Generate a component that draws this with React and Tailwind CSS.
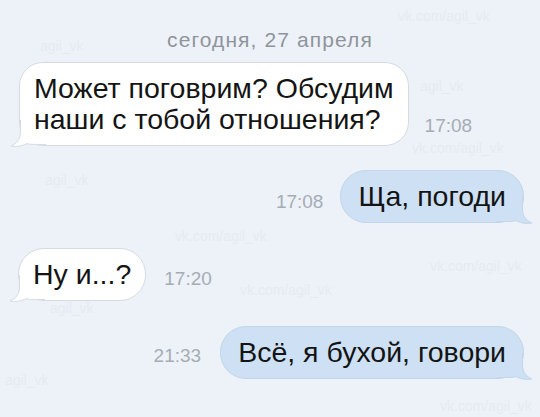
import React from "react";

const FONT = "font-['Liberation_Sans','Noto_Sans',Arial,sans-serif]";

function TailLeft() {
  return (
    <svg
      className="absolute left-[-10px] bottom-[-4px]"
      width="36"
      height="32"
      viewBox="0 0 36 32"
    >
      <path
        d="M10.5 3 L10.5 15 C10.5 22 7 26.5 1 29 C7 30.2 13 28.8 17 26.6 C20 27.6 24 27.5 36 27.5 L36 3 Z"
        fill="#ffffff"
      />
      <path
        d="M10.5 3 L10.5 15 C10.5 22 7 26.5 1 29 C7 30.2 13 28.8 17 26.6 C20 27.6 24 27.5 36 27.5"
        fill="none"
        stroke="#d6dbe3"
        strokeWidth="1"
      />
    </svg>
  );
}

function TailRight() {
  return (
    <svg
      className="absolute right-[-10px] bottom-[-4px]"
      width="36"
      height="32"
      viewBox="0 0 36 32"
    >
      <g transform="translate(36 0) scale(-1 1)">
        <path
          d="M10.5 3 L10.5 15 C10.5 22 7 26.5 1 29 C7 30.2 13 28.8 17 26.6 C20 27.6 24 27.5 36 27.5 L36 3 Z"
          fill="#cee0f4"
        />
        <path
          d="M10.5 3 L10.5 15 C10.5 22 7 26.5 1 29 C7 30.2 13 28.8 17 26.6 C20 27.6 24 27.5 36 27.5"
          fill="none"
          stroke="#c2d5ea"
          strokeWidth="1"
        />
      </g>
    </svg>
  );
}

function Time({ children, className = "" }) {
  return (
    <span
      className={"text-[19px] leading-[20px] text-[#a6acb4] " + className}
    >
      {children}
    </span>
  );
}

const marks = [
  { t: "vk.com/agil_vk", c: "left-[398px] top-[8px]" },
  { t: "agil_vk", c: "left-[40px] top-[38px]" },
  { t: "agil_vk", c: "left-[420px] top-[78px]" },
  { t: "vk.com/agil_vk", c: "left-[412px] top-[140px]" },
  { t: "agil_vk", c: "left-[45px] top-[172px]" },
  { t: "vk.com/agil_vk", c: "left-[175px] top-[228px]" },
  { t: "vk.com/agil_vk", c: "left-[430px] top-[258px]" },
  { t: "vk.com/agil_vk", c: "left-[240px] top-[282px]" },
  { t: "agil_vk", c: "left-[50px] top-[300px]" },
  { t: "agil_vk", c: "left-[5px] top-[372px]" },
  { t: "vk.com/agil_vk", c: "left-[440px] top-[398px]" },
];

const textCls =
  "relative z-10 text-[28.5px] leading-[31px] text-[#141414] whitespace-nowrap";

export default function App() {
  return (
    <div
      className={
        "relative w-[540px] h-[417px] overflow-hidden bg-[#edf2f9] " + FONT
      }
    >
      {marks.map((m, i) => (
        <span
          key={i}
          className={
            "absolute text-[14px] leading-[16px] text-[#e5eaf2] select-none " +
            m.c
          }
        >
          {m.t}
        </span>
      ))}

      <div className="relative flex flex-col pt-[28px]">
        <div className="text-center text-[21px] leading-[24px] tracking-[1.1px] text-[#8f949c]">
          сегодня, 27 апреля
        </div>

        {/* message 1 */}
        <div className="mt-[10px] flex items-end pl-[19px] gap-[16px]">
          <div className="relative rounded-[24px] border border-[#d6dbe3] bg-white px-[14px] py-[10px]">
            <span className={textCls + " block"}>
              Может поговрим? Обсудим
              <br />
              наши с тобой отношения?
            </span>
            <TailLeft />
          </div>
          <Time className="mb-[10px]">17:08</Time>
        </div>

        {/* message 2 */}
        <div className="mt-[24px] flex items-end justify-end pr-[16px] gap-[17px]">
          <Time className="mb-[11px]">17:08</Time>
          <div className="relative rounded-[26px] border border-[#c2d5ea] bg-[#cee0f4] px-[17px] py-[10px]">
            <span className={textCls + " block"}>Ща, погоди</span>
            <TailRight />
          </div>
        </div>

        {/* message 3 */}
        <div className="mt-[25px] flex items-end pl-[18px] gap-[18px]">
          <div className="relative rounded-[26px] border border-[#d6dbe3] bg-white px-[14px] py-[10px]">
            <span className={textCls + " block"}>Ну и...?</span>
            <TailLeft />
          </div>
          <Time className="mb-[12px]">17:20</Time>
        </div>

        {/* message 4 */}
        <div className="mt-[25px] flex items-end justify-end pr-[16px] gap-[19px]">
          <Time className="mb-[13px]">21:33</Time>
          <div className="relative rounded-[26px] border border-[#c2d5ea] bg-[#cee0f4] px-[17px] py-[10px]">
            <span className={textCls + " block"}>Всё, я бухой, говори</span>
            <TailRight />
          </div>
        </div>
      </div>
    </div>
  );
}
